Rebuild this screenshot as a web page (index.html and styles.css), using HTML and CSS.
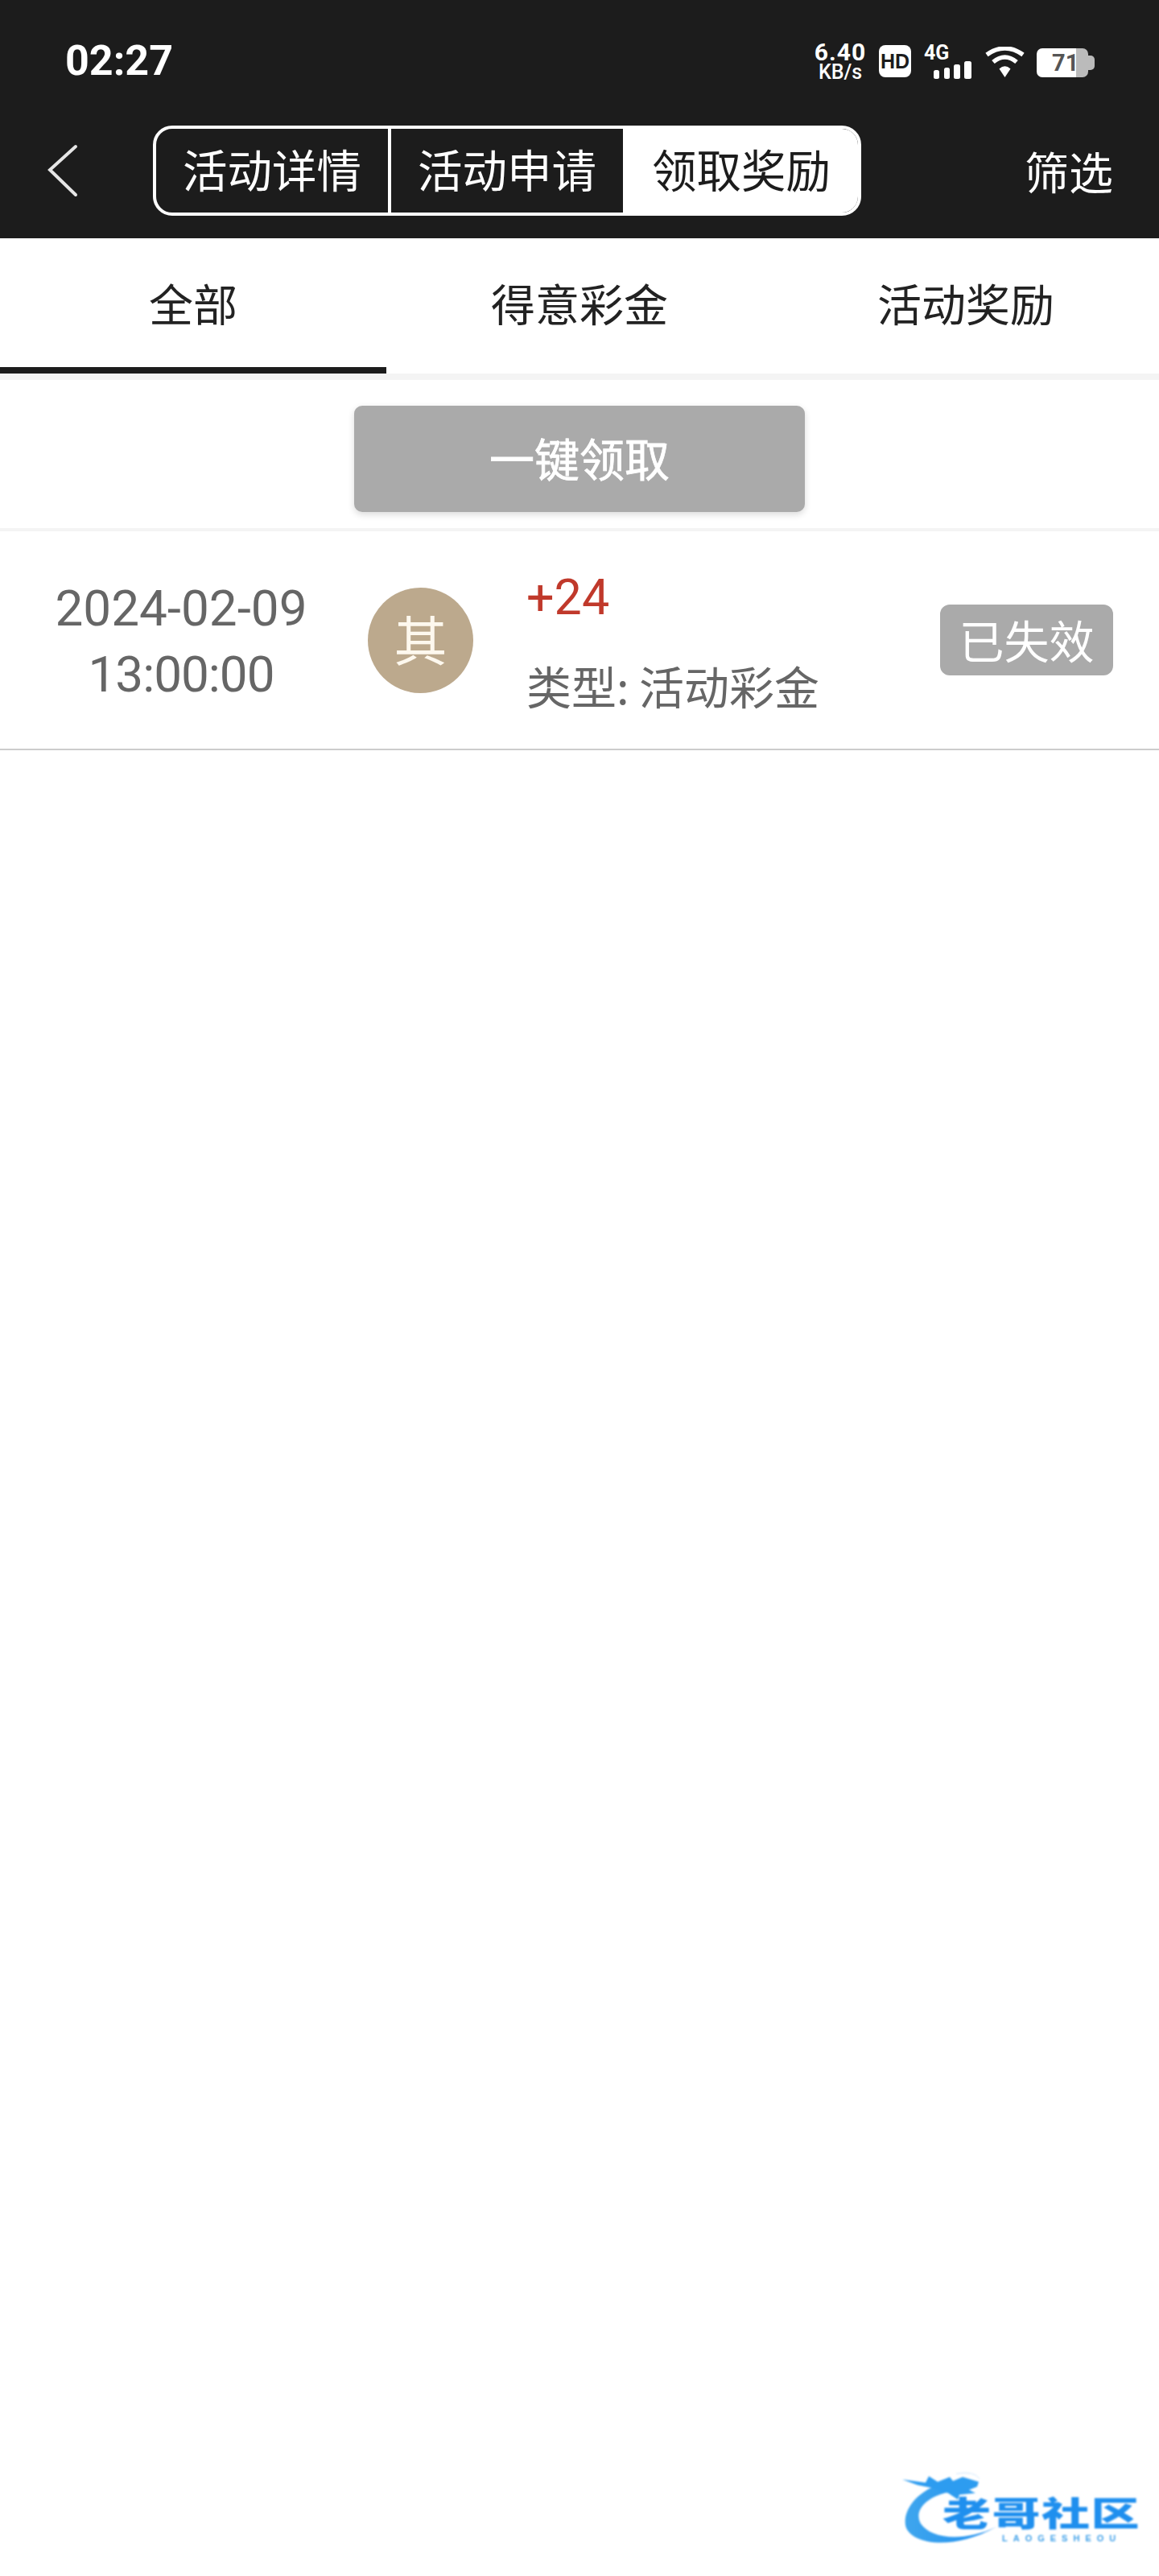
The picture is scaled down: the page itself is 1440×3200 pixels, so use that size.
FILE: index.html
```html
<!DOCTYPE html>
<html lang="zh-CN">
<head>
    <meta charset="UTF-8">
    <meta name="viewport" content="width=device-width, initial-scale=1.0">
    <title>领取奖励</title>
    <link rel="stylesheet" href="styles.css">
</head>
<body>

    <!-- Dark header: status bar + nav -->
    <header class="header">
        <div class="status-bar">
            <span class="time">02:27</span>
            <div class="status-icons">
                <div class="net-speed">
                    <span class="net-value">6.40</span>
                    <span class="net-unit">KB/s</span>
                </div>
                <div class="hd-badge">HD</div>
                <div class="signal">
                    <span class="signal-label">4G</span>
                    <svg class="signal-bars" width="47" height="22" viewBox="0 0 47 22">
                        <rect x="0" y="11" width="7" height="11" rx="2.5"/>
                        <rect x="13" y="8" width="7" height="14" rx="2.5"/>
                        <rect x="25" y="4" width="8" height="18" rx="2.5"/>
                        <rect x="38" y="0" width="9" height="22" rx="2.5"/>
                    </svg>
                </div>
                <svg class="wifi" width="49" height="38" viewBox="0 0 49 38">
                    <path d="M2 10 Q24.500 -6 47 10" fill="none" stroke="#fff" stroke-width="5.500"/>
                    <path d="M10 19 Q24.500 7 39 19" fill="none" stroke="#fff" stroke-width="5.500"/>
                    <path d="M17.500 27.500 Q24.500 21 31.500 27.500 L24.500 38 Z" fill="#fff" stroke="none"/>
                </svg>
                <div class="battery">
                    <div class="battery-body">71</div>
                    <div class="battery-nub"></div>
                </div>
            </div>
        </div>

        <nav class="nav">
            <svg class="back" width="38" height="66" viewBox="0 0 38 66">
                <path d="M35 3 L3 32 L35 63" fill="none" stroke="#e6e6e6" stroke-width="4" stroke-linecap="round"/>
            </svg>
            <div class="segments">
                <div class="segment">活动详情</div>
                <div class="segment">活动申请</div>
                <div class="segment active">领取奖励</div>
            </div>
            <span class="filter">筛选</span>
        </nav>
    </header>

    <!-- Tabs -->
    <div class="tabs">
        <div class="tab active">全部</div>
        <div class="tab">得意彩金</div>
        <div class="tab">活动奖励</div>
    </div>

    <div class="claim-bar">
        <button class="claim-btn">一键领取</button>
    </div>

    <!-- Reward list -->
    <div class="record">
        <div class="record-date">
            <div>2024-02-09</div>
            <div class="record-clock">13:00:00</div>
        </div>
        <div class="record-avatar">其</div>
        <div class="record-info">
            <div class="record-amount">+24</div>
            <div class="record-type">类型: 活动彩金</div>
        </div>
        <div class="record-status">已失效</div>
    </div>

    <!-- Watermark logo -->
    <div class="watermark">
        <svg class="watermark-dragon" width="130" height="100" viewBox="0 0 130 100">
            <defs>
                <linearGradient id="dragonBlue" x1="0" y1="0" x2="1" y2="0">
                    <stop offset="0" stop-color="#3fa6ee"/>
                    <stop offset="1" stop-color="#1e8ef0"/>
                </linearGradient>
            </defs>
            <path d="M55 13 C18 22 2 48 5 66 C9 88 60 100 118 68 C75 88 36 82 24 64 C15 48 30 30 62 24 Z" fill="url(#dragonBlue)"/>
            <path d="M1 9 L30 13 L34 5 L45 12 L60 6 L64 11 L76 6 L96 12 L94 18 L84 22 L92 26 L72 28 L70 34 L58 26 L40 20 L20 16 Z" fill="#2d9cf0"/>
            <path d="M68 2 Q90 -2 97 8" fill="none" stroke="#cfe6fa" stroke-width="1"/>
        </svg>
        <div class="watermark-name">老哥社区</div>
        <div class="watermark-sub">LAOGESHEOU</div>
    </div>

</body>
</html>
```

FILE: styles.css
```css
* {
    box-sizing: border-box;
}

body {
    margin: 0;
    height: 3200px;
    position: relative;
    overflow: hidden;
    background-color: #fff;
    font-family: "Noto Sans CJK SC", "Noto Sans", sans-serif;
}

/* Header */
.header {
    height: 296px;
    background-color: #1c1c1c;
    color: #fff;
}

.status-bar {
    height: 148px;
    display: flex;
    justify-content: space-between;
    padding: 48px 80px 0 81px;
}

.time {
    font-family: Roboto, sans-serif;
    font-size: 52px;
    font-weight: 700;
    line-height: 56px;
}

.status-icons {
    display: flex;
    align-items: flex-start;
    height: 52px;
}

.net-speed {
    display: flex;
    flex-direction: column;
    align-items: center;
    width: 64px;
    margin-top: 4px;
    font-family: Roboto, sans-serif;
    font-weight: 700;
}

.net-value {
    font-size: 30px;
    line-height: 26px;
    letter-spacing: 1px;
}

.net-unit {
    font-size: 25px;
    line-height: 24px;
    font-weight: 500;
}

.hd-badge {
    width: 40px;
    height: 40px;
    margin: 8px 0 0 16px;
    background-color: #fff;
    border-radius: 8px;
    color: #1c1c1c;
    font-family: "Liberation Sans", sans-serif;
    font-size: 25px;
    font-weight: 700;
    line-height: 40px;
    text-align: center;
}

.signal {
    position: relative;
    width: 59px;
    height: 40px;
    margin: 8px 0 0 16px;
}

.signal-label {
    display: block;
    font-family: Roboto, sans-serif;
    font-size: 25px;
    font-weight: 700;
    line-height: 20px;
}

.signal-bars {
    display: block;
    margin-left: 12px;
    fill: #fff;
}

.wifi {
    margin: 10px 0 0 17px;
}

.battery {
    display: flex;
    align-items: center;
    margin: 12px 0 0 15px;
}

.battery-body {
    width: 64px;
    height: 36px;
    padding-left: 19px;
    border-radius: 7px;
    background: linear-gradient(to right, #fff 49px, #bbb 49px);
    color: #555;
    font-family: Roboto, sans-serif;
    font-size: 29px;
    font-weight: 700;
    line-height: 36px;
}

.battery-nub {
    width: 8px;
    height: 18px;
    border-radius: 0 5px 5px 0;
    background-color: #bbb;
}

/* Nav row */
.nav {
    height: 148px;
    display: flex;
    align-items: flex-start;
    padding: 8px 57px 0 59px;
}

.back {
    margin: 23px 0 0 0;
}

.segments {
    display: flex;
    height: 112px;
    margin-left: 93px;
    border: 4px solid #fff;
    border-radius: 24px;
    overflow: hidden;
}

.segment {
    width: 292px;
    font-size: 55.500px;
    line-height: 98px;
    text-align: center;
    border-right: 4px solid #fff;
}

.segment:nth-child(2) {
    width: 288px;
    border-right: none;
}

.segment.active {
    width: 292px;
    padding-left: 2px;
    border-right: none;
    background-color: #fff;
    color: #1c1c1c;
}

.filter {
    margin-left: auto;
    font-size: 55px;
    line-height: 110px;
}

/* Tabs */
.tabs {
    display: flex;
    height: 176px;
    border-bottom: 8px solid #f4f4f4;
}

.tab {
    width: 480px;
    height: 168px;
    color: #222;
    font-size: 55px;
    line-height: 158px;
    text-align: center;
}

.tab.active {
    border-bottom: 8px solid #1c1c1c;
}

/* Claim button */
.claim-bar {
    display: flex;
    justify-content: center;
    height: 188px;
    padding-top: 32px;
    border-bottom: 4px solid #f4f4f4;
}

.claim-btn {
    width: 560px;
    height: 132px;
    border: none;
    border-radius: 10px;
    background-color: #aaa;
    box-shadow: 0 3px 8px rgba(0, 0, 0, 0.15);
    color: #fff;
    font-family: inherit;
    font-size: 56px;
    font-weight: 400;
    -webkit-text-stroke: 0.8px #fff;
    line-height: 128px;
    padding: 0 0 4px;
}

/* Record row */
.record {
    display: flex;
    align-items: center;
    height: 272px;
    padding-right: 57px;
    border-bottom: 2px solid #ccc;
}

.record-date {
    width: 450px;
    margin-right: 7px;
    margin-top: 4px;
    color: #666;
    font-family: Roboto, sans-serif;
    font-size: 62px;
    font-weight: 400;
    line-height: 82px;
    text-align: center;
}

.record-clock {
    letter-spacing: -1px;
}

.record-avatar {
    width: 131px;
    height: 131px;
    margin-right: 66px;
    border-radius: 50%;
    background-color: #bca98d;
    color: #fdf8ee;
    font-size: 66px;
    line-height: 125px;
    text-align: center;
}

.record-info {
    flex: 1;
    display: flex;
    flex-direction: column;
    gap: 45px;
    padding-top: 3px;
}

.record-amount {
    color: #c0392b;
    font-family: Roboto, sans-serif;
    font-size: 61px;
    line-height: 64px;
}

.record-type {
    color: #666;
    font-size: 56px;
    line-height: 64px;
}

.record-status {
    width: 215px;
    height: 88px;
    border-radius: 12px;
    background-color: #aaa;
    color: #fff;
    font-size: 56px;
    line-height: 86px;
    text-align: center;
}

/* Watermark sits on top of the empty page */
.watermark {
    position: absolute;
    left: 1120px;
    top: 3070px;
    width: 310px;
    height: 110px;
    filter: blur(0.8px);
}

.watermark-dragon {
    position: absolute;
    left: 0;
    top: 1px;
}

.watermark-name {
    position: absolute;
    left: 51px;
    top: 26px;
    color: #1f8fee;
    font-size: 42px;
    font-weight: 900;
    letter-spacing: 1px;
    line-height: 48px;
    white-space: nowrap;
    transform: scaleX(1.430);
    transform-origin: left center;
}

.watermark-sub {
    position: absolute;
    left: 125px;
    top: 77px;
    color: #3d9fe8;
    font-family: "Liberation Sans", sans-serif;
    font-size: 11px;
    font-weight: 700;
    letter-spacing: 7px;
    line-height: 12px;
}
```
